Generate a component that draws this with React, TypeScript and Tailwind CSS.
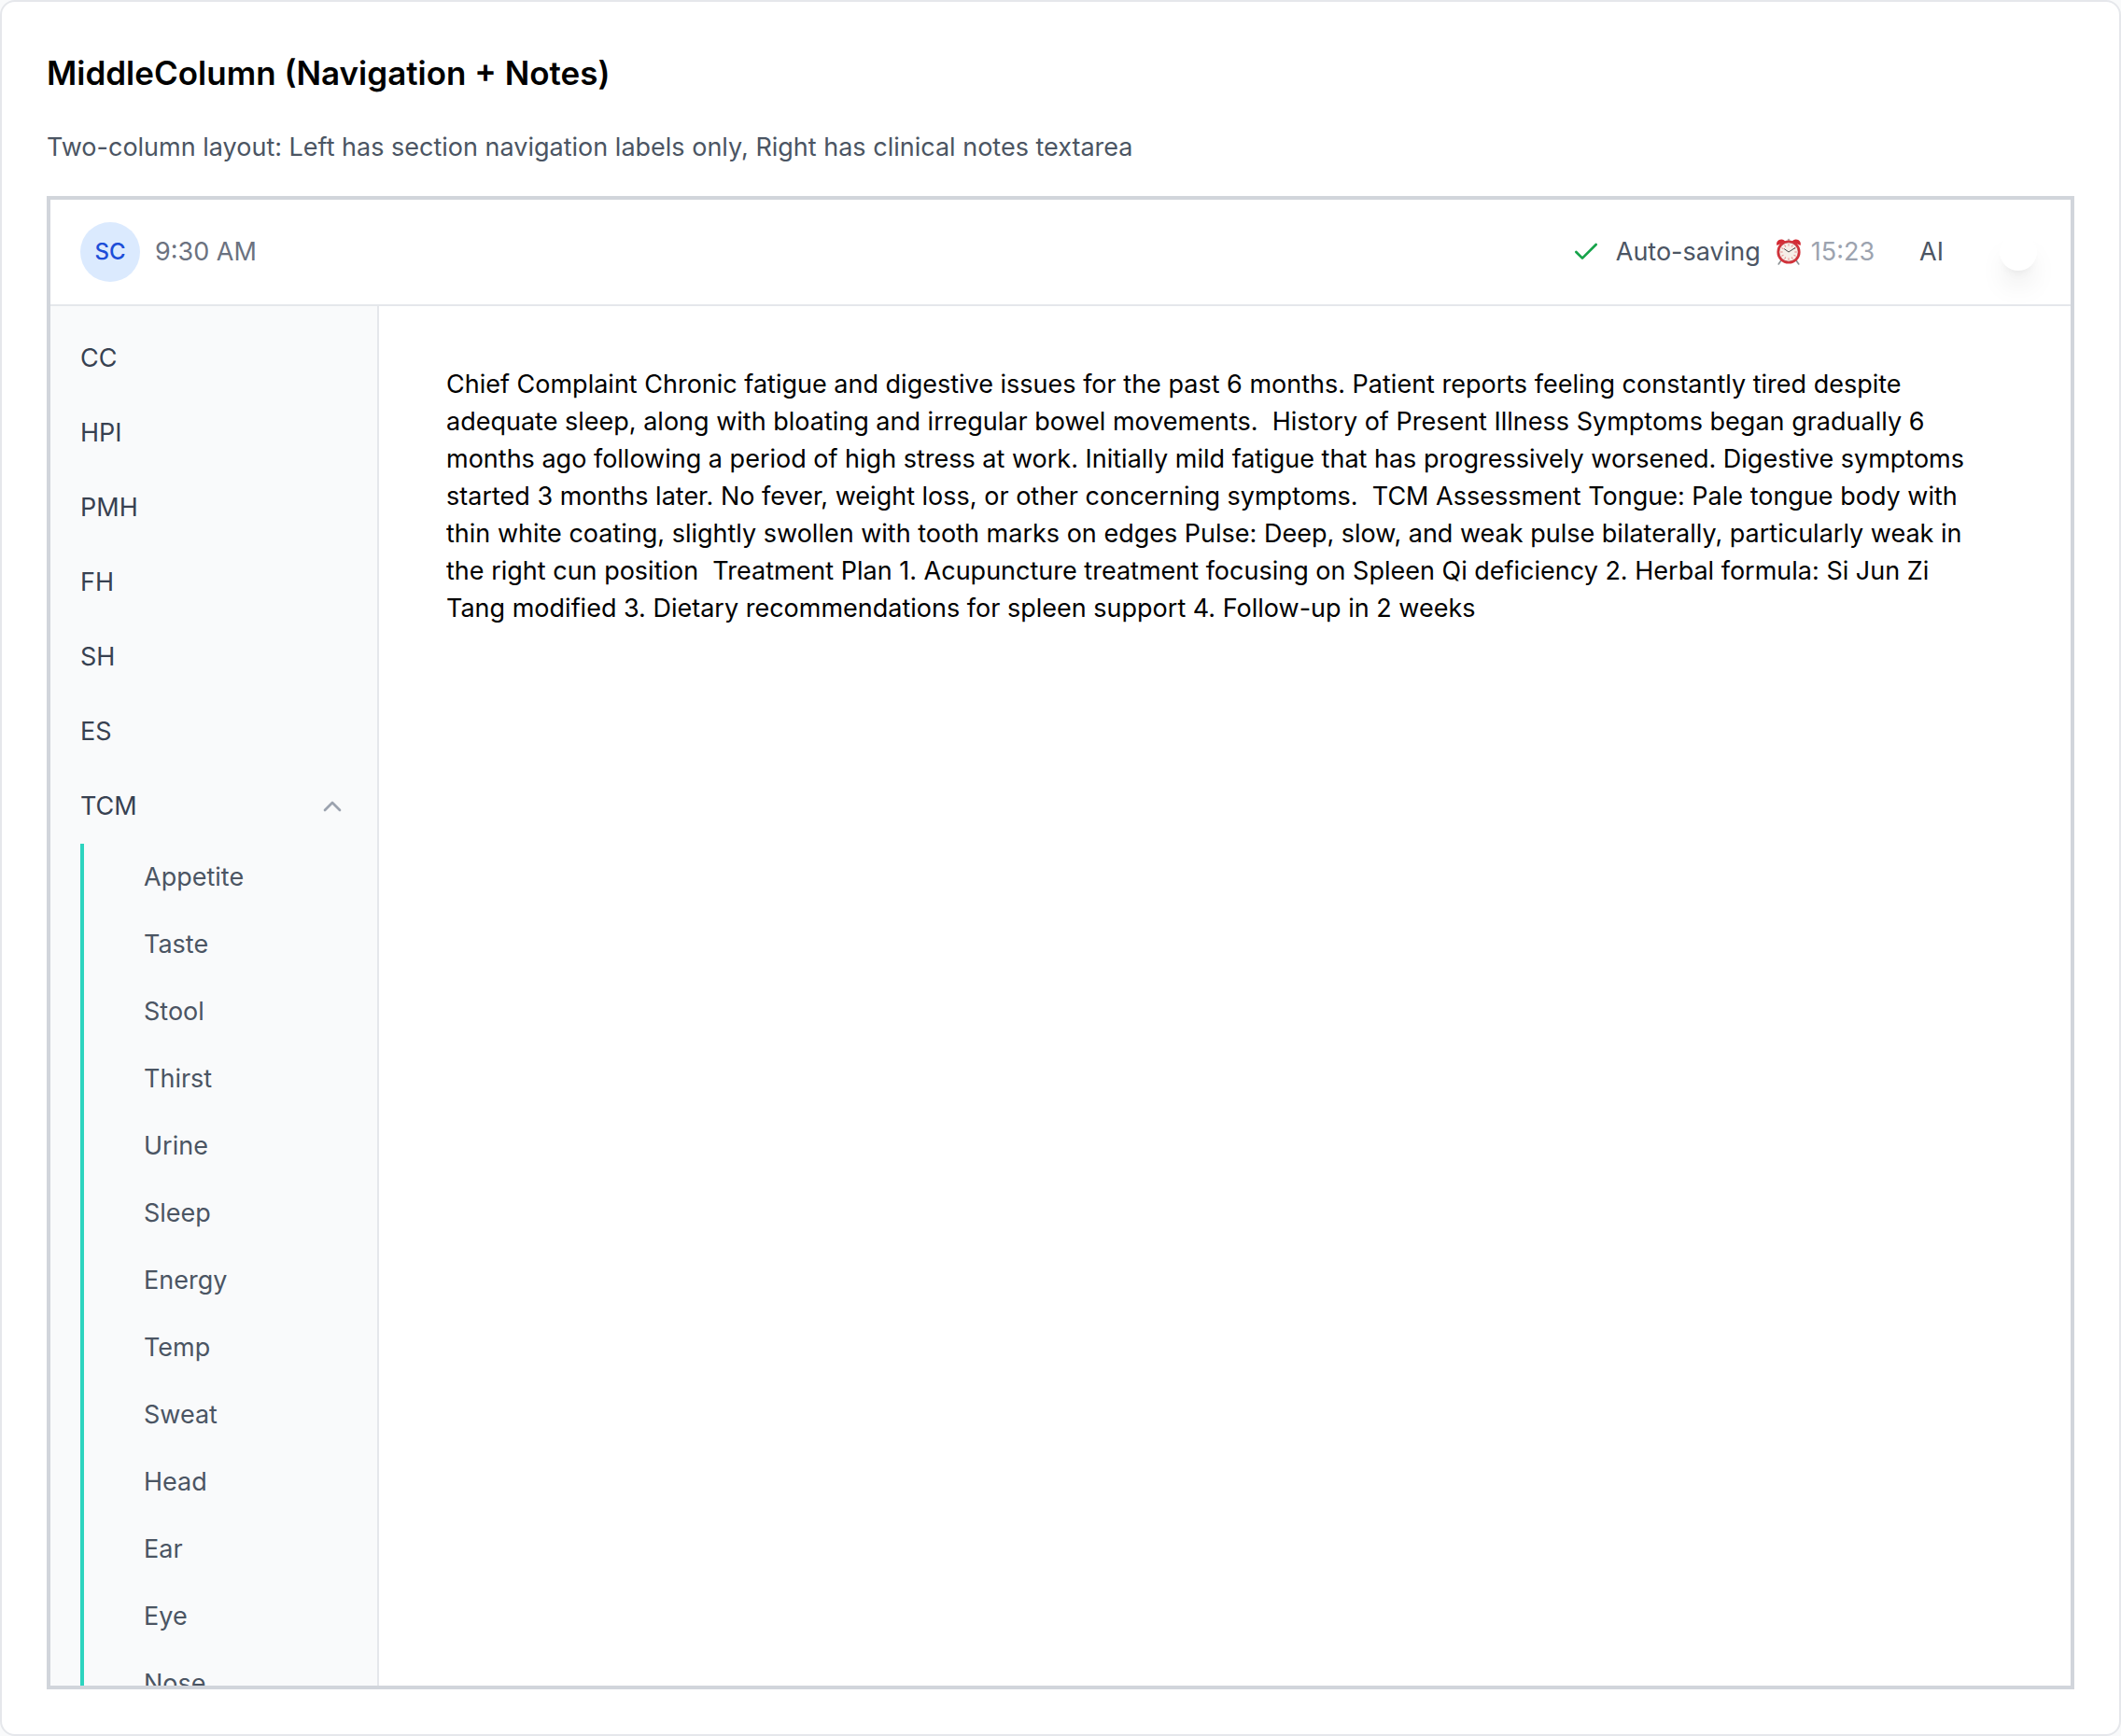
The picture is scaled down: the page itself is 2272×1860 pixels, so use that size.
import { useState } from 'react';
import { Check, ChevronDown, ChevronUp } from 'lucide-react';

const sections = ['CC', 'HPI', 'PMH', 'FH', 'SH', 'ES'];

const tcmItems = [
  'Appetite', 'Taste', 'Stool', 'Thirst', 'Urine', 'Sleep', 'Energy',
  'Temp', 'Sweat', 'Head', 'Ear', 'Eye', 'Nose',
];

const initialNotes =
  'Chief Complaint Chronic fatigue and digestive issues for the past 6 months. Patient reports feeling constantly tired despite adequate sleep, along with bloating and irregular bowel movements.  History of Present Illness Symptoms began gradually 6 months ago following a period of high stress at work. Initially mild fatigue that has progressively worsened. Digestive symptoms started 3 months later. No fever, weight loss, or other concerning symptoms.  TCM Assessment Tongue: Pale tongue body with thin white coating, slightly swollen with tooth marks on edges Pulse: Deep, slow, and weak pulse bilaterally, particularly weak in the right cun position  Treatment Plan 1. Acupuncture treatment focusing on Spleen Qi deficiency 2. Herbal formula: Si Jun Zi Tang modified 3. Dietary recommendations for spleen support 4. Follow-up in 2 weeks';

const ticks = Array.from({ length: 12 }, (_, i) => i * 30);

function AlarmClock() {
  return (
    <svg viewBox="0 0 32 32" className="size-8" aria-hidden="true">
      <path d="M8 25 5.2 29M24 25l2.8 4" stroke="#8b9195" strokeWidth="1.6" strokeLinecap="round" />
      <path d="M3.4 9C2.2 5.400 4.800 2.300 8.400 2.500c1.900.1 3.300 1 4.100 2.300z" fill="#d42a33" />
      <path d="M28.600 9c1.200-3.600-1.400-6.700-5-6.500-1.900.1-3.300 1-4.100 2.300z" fill="#d42a33" />
      <rect x="14.800" y="1.800" width="2.400" height="3" rx="1" fill="#b9a9a9" />
      <circle cx="16" cy="16" r="12.600" fill="#d2323a" />
      <circle cx="16" cy="16" r="10.200" fill="#f6efe8" stroke="#b3242b" strokeWidth="0.6" />
      {ticks.map((a) => (
        <path key={a} d="M16 7.200v2.400" stroke="#e58a8a" strokeWidth="1" transform={`rotate(${a} 16 16)`} />
      ))}
      <path d="M11.500 12.800l4.500 3.200 6.800-4.400" fill="none" stroke="#4a4a4a" strokeWidth="1" strokeLinecap="round" />
    </svg>
  );
}

export default function App() {
  const [open, setOpen] = useState(true);
  const [notes, setNotes] = useState(initialNotes);
  const [ai, setAi] = useState(true);
  const Chevron = open ? ChevronUp : ChevronDown;

  return (
    <div className="h-screen bg-[#f9fafb] font-[Inter,sans-serif] text-[27px] leading-10">
      <section className="flex h-full flex-col rounded-2xl border-2 border-[#e5e7eb] bg-white p-12 text-black">
        <h3 className="mb-8 text-[35px] leading-[56px] font-semibold">MiddleColumn (Navigation + Notes)</h3>
        <p className="mb-8 text-[#4b5563]">
          Two-column layout: Left has section navigation labels only, Right has clinical notes textarea
        </p>

        <div className="flex min-h-0 flex-1 flex-col border-4 border-[#d1d5db]">
          <header className="flex items-center justify-between border-b-2 border-[#e5e7eb] px-8 py-6">
            <div className="flex items-center gap-4">
              <div className="flex size-16 items-center justify-center rounded-full bg-[#dbeafe] text-2xl font-medium text-[#1d4ed8]">
                SC
              </div>
              <span className="text-[#6b7280]">9:30 AM</span>
            </div>

            <div className="flex items-center gap-12">
              <div className="flex items-center">
                <Check className="mr-4 size-8 text-[#16a34a]" aria-hidden="true" />
                <span className="text-[#4b5563]">Auto-saving</span>
                <span className="ml-3.5 flex items-center gap-2 text-[#9ca3af]">
                  <AlarmClock />
                  15:23
                </span>
              </div>
              <div className="flex items-center gap-6">
                <span id="ai-label" className="text-[#4b5563]">AI</span>
                <button
                  type="button"
                  role="switch"
                  aria-checked={ai}
                  aria-labelledby="ai-label"
                  onClick={() => setAi(!ai)}
                  className="flex h-12 w-20 items-center justify-end rounded-full p-1"
                >
                  <span className="size-10 rounded-full bg-white shadow-[0_20px_30px_-6px_rgba(0,0,0,0.1),0_8px_12px_-8px_rgba(0,0,0,0.1)]" />
                </button>
              </div>
            </div>
          </header>

          <div className="flex min-h-0 flex-1">
            <nav className="w-88 shrink-0 overflow-hidden border-r-2 border-[#e5e7eb] bg-[#f9fafb] pt-4" aria-label="Sections">
              {sections.map((s) => (
                <button key={s} type="button" className="block w-full px-8 py-5 text-left text-[#374151]">
                  {s}
                </button>
              ))}
              <button
                type="button"
                aria-expanded={open}
                onClick={() => setOpen(!open)}
                className="flex w-full items-center justify-between px-8 py-5 text-left text-[#374151]"
              >
                TCM
                <Chevron className="size-8 text-[#9ca3af]" aria-hidden="true" />
              </button>
              {open && (
                <div className="ml-8 border-l-4 border-[#2dd4bf]">
                  {tcmItems.map((t) => (
                    <button key={t} type="button" className="block w-full py-4 pl-16 text-left text-[#4b5563]">
                      {t}
                    </button>
                  ))}
                </div>
              )}
            </nav>

            <main className="flex min-w-0 flex-1 py-16 pr-22 pl-18">
              <textarea
                aria-label="Clinical notes"
                value={notes}
                onChange={(e) => setNotes(e.target.value)}
                className="w-full resize-none bg-transparent outline-none"
              />
            </main>
          </div>
        </div>
      </section>
    </div>
  );
}
